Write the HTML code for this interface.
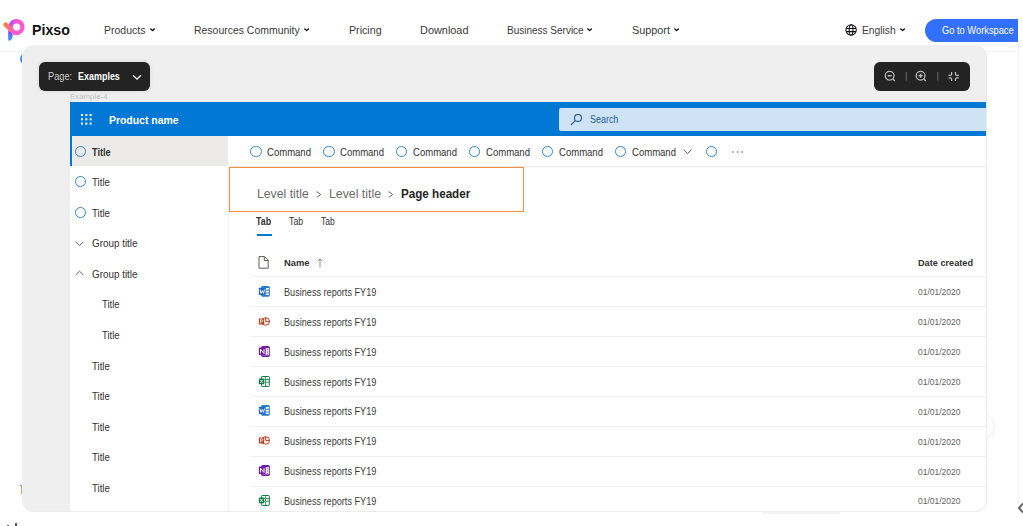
<!DOCTYPE html>
<html><head><meta charset="utf-8">
<style>
*{margin:0;padding:0;box-sizing:border-box}
html,body{width:1023px;height:526px;overflow:hidden;background:#fff;font-family:"Liberation Sans",sans-serif;color:#323130}
.abs{position:absolute}
.t{position:absolute;white-space:nowrap;line-height:1}
</style></head><body>
<svg class="abs" style="left:0px;top:14px" width="30" height="30" viewBox="0 0 30 30">
  <defs>
   <linearGradient id="lgd" x1="0" y1="0" x2="0" y2="1"><stop offset="0" stop-color="#8a3cff"/><stop offset="1" stop-color="#2aa6ff"/></linearGradient>
   <linearGradient id="lgr" x1="0" y1="0" x2="1" y2="0.6"><stop offset="0" stop-color="#b04cff"/><stop offset="0.45" stop-color="#ff58cc"/><stop offset="1" stop-color="#ff58cc"/></linearGradient>
   <linearGradient id="lgo" gradientUnits="userSpaceOnUse" x1="5" y1="10.5" x2="14" y2="18.5"><stop offset="0" stop-color="#ff7a40"/><stop offset="0.55" stop-color="#ff6a8a"/><stop offset="1" stop-color="#ff58cc"/></linearGradient>
  </defs>
  <circle cx="16.5" cy="13.1" r="5.9" fill="none" stroke="url(#lgr)" stroke-width="4.4"/>
  <path d="M8.2 16.5 L8.2 25.8 Q8.4 27.2 10 26.6 Q12.6 25.2 12.6 21.2 L12.6 18.5 Z" fill="url(#lgd)"/>
  <path d="M5.6 10.6 L13.6 18.2" stroke="url(#lgo)" stroke-width="4.4" stroke-linecap="round"/>
</svg>
<div class="t" style="left:31.70px;top:23.00px;font-size:14.5px;transform:scaleX(0.9789);transform-origin:0.00px 0;color:#111;font-weight:bold;">Pixso</div>
<div class="t" style="left:103.60px;top:25.00px;font-size:10.6px;transform:scaleX(0.9900);transform-origin:0.00px 0;color:#3a3a3a;font-weight:normal;">Products</div>
<svg class="abs" style="left:149.6px;top:28.1px" width="6" height="4" viewBox="0 0 6 4"><path d="M0.8 1 L2.6 2.5 L4.4 1" fill="none" stroke="#111" stroke-width="1.4" stroke-linecap="round" stroke-linejoin="round"/></svg>
<div class="t" style="left:194.40px;top:25.00px;font-size:10.6px;transform:scaleX(0.9868);transform-origin:0.00px 0;color:#3a3a3a;font-weight:normal;">Resources Community</div>
<svg class="abs" style="left:304.4px;top:28.1px" width="6" height="4" viewBox="0 0 6 4"><path d="M0.8 1 L2.6 2.5 L4.4 1" fill="none" stroke="#111" stroke-width="1.4" stroke-linecap="round" stroke-linejoin="round"/></svg>
<div class="t" style="left:348.80px;top:25.00px;font-size:10.6px;transform:scaleX(1.0067);transform-origin:0.00px 0;color:#3a3a3a;font-weight:normal;">Pricing</div>
<div class="t" style="left:419.70px;top:25.00px;font-size:10.6px;transform:scaleX(1.0294);transform-origin:0.00px 0;color:#3a3a3a;font-weight:normal;">Download</div>
<div class="t" style="left:506.50px;top:25.00px;font-size:10.6px;transform:scaleX(0.9434);transform-origin:0.00px 0;color:#3a3a3a;font-weight:normal;">Business Service</div>
<svg class="abs" style="left:587.4px;top:28.1px" width="6" height="4" viewBox="0 0 6 4"><path d="M0.8 1 L2.6 2.5 L4.4 1" fill="none" stroke="#111" stroke-width="1.4" stroke-linecap="round" stroke-linejoin="round"/></svg>
<div class="t" style="left:632.00px;top:25.00px;font-size:10.6px;transform:scaleX(1.0228);transform-origin:0.00px 0;color:#3a3a3a;font-weight:normal;">Support</div>
<svg class="abs" style="left:674.2px;top:28.1px" width="6" height="4" viewBox="0 0 6 4"><path d="M0.8 1 L2.6 2.5 L4.4 1" fill="none" stroke="#111" stroke-width="1.4" stroke-linecap="round" stroke-linejoin="round"/></svg>
<svg class="abs" style="left:844px;top:22.8px" width="14" height="14" viewBox="0 0 14 14"><g fill="none" stroke="#111" stroke-width="1.05"><circle cx="7.1" cy="7" r="5.2"/><ellipse cx="7.1" cy="7" rx="1.9" ry="5.2"/><path d="M2.2 5.4 H12 M2.2 8.6 H12"/></g></svg>
<div class="t" style="left:862.00px;top:25.00px;font-size:10.6px;transform:scaleX(0.9693);transform-origin:0.00px 0;color:#3a3a3a;font-weight:normal;">English</div>
<svg class="abs" style="left:899.9px;top:28.1px" width="6" height="4" viewBox="0 0 6 4"><path d="M0.8 1 L2.6 2.5 L4.4 1" fill="none" stroke="#111" stroke-width="1.4" stroke-linecap="round" stroke-linejoin="round"/></svg>
<div class="abs" style="left:925px;top:18.5px;width:93.2px;height:23.2px;background:#3370ff;border-radius:12px 0 0 12px"></div>
<div class="t" style="left:941.50px;top:26.00px;font-size:10.3px;transform:scaleX(0.9035);transform-origin:0.00px 0;color:#fff;font-weight:normal;">Go to Workspace</div>
<div class="abs" style="left:0;top:51px;width:1018px;height:1px;background:#f4f4f4"></div>
<div class="abs" style="left:1018px;top:42px;width:1px;height:473px;background:#f5f5f5"></div>
<div class="abs" style="left:971px;top:415px;width:22px;height:22px;border-radius:50%;background:#fff;box-shadow:0 1px 8px rgba(0,0,0,.09)"></div>
<div class="abs" style="left:763px;top:511px;width:77px;height:3px;background:#f4f4f7"></div>
<svg class="abs" style="left:1017px;top:502px" width="6" height="12" viewBox="0 0 6 12"><path d="M6 1.5 L2 6 L6 10.5" fill="none" stroke="#666" stroke-width="2"/></svg>
<div class="abs" style="left:20.2px;top:52.8px;width:12px;height:12px;border-radius:50%;background:#3a8bff"></div>
<div class="abs" style="left:21.3px;top:485.5px;width:1.2px;height:8px;background:#d9a066"></div><div class="abs" style="left:20px;top:485px;width:1.5px;height:1px;background:#999"></div>
<div class="abs" style="left:7px;top:525px;width:2px;height:1px;background:#777"></div><div class="abs" style="left:15px;top:523px;width:1.5px;height:3px;background:#555"></div>
<div class="abs" style="left:0;top:0;width:1023px;height:526px;clip-path:inset(45px 36px 14px 22px round 12px)"><div class="abs" style="left:0;top:0;width:1023px;height:526px;background:#efefef"></div>
<div class="abs" style="left:39px;top:62.3px;width:111px;height:28.3px;background:#232323;border-radius:6px;box-shadow:0 0 5px rgba(0,0,0,.1)"></div>
<div class="t" style="left:47.60px;top:71.00px;font-size:10.7px;transform:scaleX(0.8649);transform-origin:0.00px 0;color:#cfcfcf;font-weight:normal;">Page:</div>
<div class="t" style="left:77.70px;top:71.00px;font-size:10.7px;transform:scaleX(0.8385);transform-origin:0.00px 0;color:#fff;font-weight:bold;">Examples</div>
<svg class="abs" style="left:132px;top:73.5px" width="10" height="7" viewBox="0 0 10 7"><path d="M1 1.3 L5 5.2 L9 1.3" fill="none" stroke="#fff" stroke-width="1.3"/></svg>
<div class="abs" style="left:874px;top:62px;width:96px;height:28.7px;background:#232323;border-radius:6px"></div>
<svg class="abs" style="left:884px;top:70px" width="80" height="14" viewBox="0 0 80 14">
    <g fill="none" stroke="#bababa" stroke-width="1.3">
      <circle cx="5.6" cy="5.8" r="4.4"/><path d="M8.8 9 L10.8 11"/><path d="M3.6 5.8 H7.6" stroke-width="1.6"/>
      <circle cx="36.6" cy="5.8" r="4.4"/><path d="M39.8 9 L41.8 11"/><path d="M34.6 5.8 H38.6 M36.6 3.8 V7.8" stroke-width="1.5"/>
      <path d="M67.6 2 V4 Q67.6 5.3 66.3 5.3 H64.5 M71.5 2 V4 Q71.5 5.3 72.8 5.3 H74.8 M67.6 11 V9.2 Q67.6 7.9 66.3 7.9 H64.5 M71.5 11 V9.2 Q71.5 7.9 72.8 7.9 H74.8"/>
    </g>
    <path d="M22.3 2 V10.5 M53.8 2 V10.5" stroke="#6a6a6a" stroke-width="1"/>
  </svg>
<div class="t" style="left:69.50px;top:93.00px;font-size:8px;transform:scaleX(0.9806);transform-origin:0.00px 0;color:#bdbdbd;font-weight:normal;">Example-4</div>
<div class="abs" style="left:70px;top:102px;width:960px;height:420px;background:#fff"></div>
<div class="abs" style="left:70px;top:102px;width:960px;height:34px;background:#0078d4"></div>
<svg class="abs" style="left:80.5px;top:113.5px" width="11" height="11"><g fill="#fff"><rect x="0" y="0" width="2" height="2"/><rect x="0" y="4.3" width="2" height="2"/><rect x="0" y="8.6" width="2" height="2"/><rect x="4.3" y="0" width="2" height="2"/><rect x="4.3" y="4.3" width="2" height="2"/><rect x="4.3" y="8.6" width="2" height="2"/><rect x="8.6" y="0" width="2" height="2"/><rect x="8.6" y="4.3" width="2" height="2"/><rect x="8.6" y="8.6" width="2" height="2"/></g></svg>
<div class="t" style="left:108.80px;top:115.00px;font-size:11px;transform:scaleX(0.9473);transform-origin:0.00px 0;color:#fff;font-weight:bold;">Product name</div>
<div class="abs" style="left:559.3px;top:108.2px;width:460px;height:22.4px;background:#cee3f6;border-radius:2px"></div>
<svg class="abs" style="left:570px;top:113.5px" width="13" height="12" viewBox="0 0 13 12"><g fill="none" stroke="#245f96" stroke-width="1.1"><circle cx="8" cy="3.9" r="3.5"/><path d="M5.5 6.4 L0.9 11"/></g></svg>
<div class="t" style="left:590.00px;top:115.00px;font-size:10.2px;transform:scaleX(0.8783);transform-origin:0.00px 0;color:#245f96;font-weight:normal;">Search</div>
<div class="abs" style="left:70px;top:136px;width:158px;height:30px;background:#edebe9"></div>
<div class="abs" style="left:70px;top:136px;width:2px;height:30px;background:#0078d4"></div>
<div class="abs" style="left:227.5px;top:166px;width:1px;height:360px;background:#f3f2f1"></div>
<div class="abs" style="left:75px;top:145.70px;width:11.2px;height:11.2px;border:1.2px solid #2f86d6;border-radius:50%"></div>
<div class="t" style="left:92.00px;top:148.00px;font-size:10.2px;transform:scaleX(0.8987);transform-origin:0.00px 0;color:#323130;font-weight:bold;">Title</div>
<div class="abs" style="left:75px;top:176.26px;width:11.2px;height:11.2px;border:1.2px solid #2f86d6;border-radius:50%"></div>
<div class="t" style="left:92.00px;top:178.00px;font-size:10.2px;transform:scaleX(0.9539);transform-origin:0.00px 0;color:#323130;font-weight:normal;">Title</div>
<div class="abs" style="left:75px;top:206.82px;width:11.2px;height:11.2px;border:1.2px solid #2f86d6;border-radius:50%"></div>
<div class="t" style="left:92.00px;top:209.00px;font-size:10.2px;transform:scaleX(0.9539);transform-origin:0.00px 0;color:#323130;font-weight:normal;">Title</div>
<svg class="abs" style="left:75px;top:240.78px" width="9" height="6" viewBox="0 0 9 6"><path d="M0.6 0.8 L4.5 4.6 L8.4 0.8" fill="none" stroke="#605e5c" stroke-width="1"/></svg>
<div class="t" style="left:92.00px;top:239.00px;font-size:10.2px;transform:scaleX(0.9687);transform-origin:0.00px 0;color:#323130;font-weight:normal;">Group title</div>
<svg class="abs" style="left:75px;top:270.34px" width="9" height="6" viewBox="0 0 9 6"><path d="M0.6 5 L4.5 1.2 L8.4 5" fill="none" stroke="#605e5c" stroke-width="1"/></svg>
<div class="t" style="left:92.00px;top:270.00px;font-size:10.2px;transform:scaleX(0.9687);transform-origin:0.00px 0;color:#323130;font-weight:normal;">Group title</div>
<div class="t" style="left:101.70px;top:300.00px;font-size:10.2px;transform:scaleX(0.9327);transform-origin:0.00px 0;color:#323130;font-weight:normal;">Title</div>
<div class="t" style="left:101.70px;top:331.00px;font-size:10.2px;transform:scaleX(0.9327);transform-origin:0.00px 0;color:#323130;font-weight:normal;">Title</div>
<div class="t" style="left:92.10px;top:362.00px;font-size:10.2px;transform:scaleX(0.9433);transform-origin:0.00px 0;color:#323130;font-weight:normal;">Title</div>
<div class="t" style="left:92.10px;top:392.00px;font-size:10.2px;transform:scaleX(0.9433);transform-origin:0.00px 0;color:#323130;font-weight:normal;">Title</div>
<div class="t" style="left:92.10px;top:423.00px;font-size:10.2px;transform:scaleX(0.9433);transform-origin:0.00px 0;color:#323130;font-weight:normal;">Title</div>
<div class="t" style="left:92.10px;top:453.00px;font-size:10.2px;transform:scaleX(0.9433);transform-origin:0.00px 0;color:#323130;font-weight:normal;">Title</div>
<div class="t" style="left:92.10px;top:484.00px;font-size:10.2px;transform:scaleX(0.9433);transform-origin:0.00px 0;color:#323130;font-weight:normal;">Title</div>
<div class="abs" style="left:228px;top:166px;width:800px;height:1px;background:#edebe9"></div>
<div class="abs" style="left:250.30px;top:145.6px;width:11.4px;height:11.4px;border:1.2px solid #2f86d6;border-radius:50%"></div>
<div class="t" style="left:267.40px;top:147.00px;font-size:10.5px;transform:scaleX(0.9080);transform-origin:0.00px 0;color:#323130;font-weight:normal;">Command</div>
<div class="abs" style="left:323.20px;top:145.6px;width:11.4px;height:11.4px;border:1.2px solid #2f86d6;border-radius:50%"></div>
<div class="t" style="left:340.30px;top:147.00px;font-size:10.5px;transform:scaleX(0.9080);transform-origin:0.00px 0;color:#323130;font-weight:normal;">Command</div>
<div class="abs" style="left:396.10px;top:145.6px;width:11.4px;height:11.4px;border:1.2px solid #2f86d6;border-radius:50%"></div>
<div class="t" style="left:413.20px;top:147.00px;font-size:10.5px;transform:scaleX(0.9080);transform-origin:0.00px 0;color:#323130;font-weight:normal;">Command</div>
<div class="abs" style="left:469.00px;top:145.6px;width:11.4px;height:11.4px;border:1.2px solid #2f86d6;border-radius:50%"></div>
<div class="t" style="left:486.10px;top:147.00px;font-size:10.5px;transform:scaleX(0.9080);transform-origin:0.00px 0;color:#323130;font-weight:normal;">Command</div>
<div class="abs" style="left:541.90px;top:145.6px;width:11.4px;height:11.4px;border:1.2px solid #2f86d6;border-radius:50%"></div>
<div class="t" style="left:559.00px;top:147.00px;font-size:10.5px;transform:scaleX(0.9080);transform-origin:0.00px 0;color:#323130;font-weight:normal;">Command</div>
<div class="abs" style="left:614.80px;top:145.6px;width:11.4px;height:11.4px;border:1.2px solid #2f86d6;border-radius:50%"></div>
<div class="t" style="left:631.90px;top:147.00px;font-size:10.5px;transform:scaleX(0.9080);transform-origin:0.00px 0;color:#323130;font-weight:normal;">Command</div>
<svg class="abs" style="left:682.5px;top:149px" width="9" height="6" viewBox="0 0 9 6"><path d="M0.6 0.8 L4.5 4.6 L8.4 0.8" fill="none" stroke="#605e5c" stroke-width="1"/></svg>
<div class="abs" style="left:705.6px;top:145.6px;width:11.4px;height:11.4px;border:1.2px solid #2f86d6;border-radius:50%"></div>
<svg class="abs" style="left:732px;top:150.5px" width="12" height="3"><g fill="#605e5c"><circle cx="1" cy="1" r="0.8"/><circle cx="5.5" cy="1" r="0.8"/><circle cx="10" cy="1" r="0.8"/></g></svg>
<div class="abs" style="left:229.3px;top:167px;width:294.8px;height:45px;border:1.3px solid #ff8a3d"></div>
<div class="t" style="left:256.50px;top:188.00px;font-size:12.5px;transform:scaleX(0.9789);transform-origin:0.00px 0;color:#6b6b6b;font-weight:normal;">Level title</div>
<svg class="abs" style="left:316px;top:190.5px" width="6" height="7" viewBox="0 0 6 7"><path d="M0.7 0.5 L4.7 3.5 L0.7 6.5" fill="none" stroke="#605e5c" stroke-width="1"/></svg>
<div class="t" style="left:328.60px;top:188.00px;font-size:12.5px;transform:scaleX(0.9846);transform-origin:0.00px 0;color:#6b6b6b;font-weight:normal;">Level title</div>
<svg class="abs" style="left:388px;top:190.5px" width="6" height="7" viewBox="0 0 6 7"><path d="M0.7 0.5 L4.7 3.5 L0.7 6.5" fill="none" stroke="#605e5c" stroke-width="1"/></svg>
<div class="t" style="left:401.30px;top:188.00px;font-size:12.5px;transform:scaleX(0.9312);transform-origin:0.00px 0;color:#252525;font-weight:bold;">Page header</div>
<div class="t" style="left:256.30px;top:217.00px;font-size:10.2px;transform:scaleX(0.8683);transform-origin:0.00px 0;color:#323130;font-weight:bold;">Tab</div>
<div class="t" style="left:289.00px;top:217.00px;font-size:10.2px;transform:scaleX(0.8647);transform-origin:0.00px 0;color:#323130;font-weight:normal;">Tab</div>
<div class="t" style="left:321.20px;top:217.00px;font-size:10.2px;transform:scaleX(0.8403);transform-origin:0.00px 0;color:#323130;font-weight:normal;">Tab</div>
<div class="abs" style="left:256.5px;top:234.3px;width:15.7px;height:2px;background:#0078d4"></div>
<svg class="abs" style="left:257.5px;top:256px" width="11" height="13" viewBox="0 0 11 13"><path d="M1 0.6 H6.5 L10.2 4.3 V12.2 H1 Z M6.3 0.6 V4.5 H10.2" fill="none" stroke="#605e5c" stroke-width="1"/></svg>
<div class="t" style="left:284.10px;top:258.00px;font-size:9.6px;transform:scaleX(0.9786);transform-origin:0.00px 0;color:#323130;font-weight:bold;">Name</div>
<svg class="abs" style="left:317px;top:257.5px" width="6" height="10" viewBox="0 0 6 10"><path d="M3 1 V9.5 M0.7 3.3 L3 1 L5.3 3.3" fill="none" stroke="#8a8886" stroke-width="0.9"/></svg>
<div class="t" style="left:917.80px;top:258.00px;font-size:9.5px;transform:scaleX(0.9641);transform-origin:0.00px 0;color:#323130;font-weight:bold;">Date created</div>
<div class="abs" style="left:250.8px;top:276px;width:780px;height:1px;background:#f0efee"></div>
<svg class="abs" style="left:258px;top:286.0px" width="13" height="12" viewBox="0 0 13 12"><rect x="3.6" y="0.5" width="7.7" height="9.7" rx="0.6" fill="#fff" stroke="#2b7cd3" stroke-width="1"/><path d="M3.6 1.5 H11.3 M7.5 4.3 H11.3 M7.5 7 H11.3 M3.6 9.6 H11.3" stroke="#2b7cd3" stroke-width="1.1"/><rect x="0.85" y="1.8" width="6.85" height="7.3" rx="0.5" fill="#1f6cc4"/><path d="M2 3.6 L3 7.4 L4.3 4.6 L5.5 7.4 L6.5 3.6" fill="none" stroke="#fff" stroke-width="0.9"/></svg>
<div class="t" style="left:284.20px;top:288.00px;font-size:10.2px;transform:scaleX(0.8956);transform-origin:0.00px 0;color:#3b3a39;font-weight:normal;">Business reports FY19</div>
<div class="t" style="left:917.50px;top:288.00px;font-size:9.1px;transform:scaleX(0.9331);transform-origin:0.00px 0;color:#616161;font-weight:normal;">01/01/2020</div>
<div class="abs" style="left:250.8px;top:306.00px;width:780px;height:1px;background:#f0efee"></div>
<svg class="abs" style="left:258px;top:315.86px" width="13" height="12" viewBox="0 0 13 12"><circle cx="7.7" cy="5.45" r="3.8" fill="#fff" stroke="#c43e1c" stroke-width="1"/><path d="M7.7 1.6 V5.45 H11.5" fill="none" stroke="#c43e1c" stroke-width="1"/><rect x="0.85" y="2.5" width="5.3" height="5.9" rx="0.5" fill="#c43e1c"/><path d="M2.6 7.4 V3.7 H3.7 Q4.8 3.7 4.8 4.8 Q4.8 5.9 3.7 5.9 H2.6" fill="none" stroke="#fff" stroke-width="0.8"/></svg>
<div class="t" style="left:284.20px;top:318.00px;font-size:10.2px;transform:scaleX(0.8956);transform-origin:0.00px 0;color:#3b3a39;font-weight:normal;">Business reports FY19</div>
<div class="t" style="left:917.50px;top:318.00px;font-size:9.1px;transform:scaleX(0.9331);transform-origin:0.00px 0;color:#616161;font-weight:normal;">01/01/2020</div>
<div class="abs" style="left:250.8px;top:336.00px;width:780px;height:1px;background:#f0efee"></div>
<svg class="abs" style="left:258px;top:345.72px" width="13" height="12" viewBox="0 0 13 12"><rect x="3.6" y="0.5" width="7.7" height="10" rx="0.6" fill="#fff" stroke="#7719aa" stroke-width="1"/><path d="M3.6 1.5 H11.3 M3.6 9.8 H11.3" stroke="#7719aa" stroke-width="1.1"/><path d="M9.3 2.8 V3.8 M9.3 5.6 V6.6 M9.3 8.3 V9.1" stroke="#7719aa" stroke-width="1.1"/><rect x="0.85" y="1.6" width="6.85" height="7.3" rx="0.6" fill="#7719aa"/><path d="M2.5 7.5 V3.2 L6 7.5 V3.2" fill="none" stroke="#fff" stroke-width="1"/></svg>
<div class="t" style="left:284.20px;top:348.00px;font-size:10.2px;transform:scaleX(0.8956);transform-origin:0.00px 0;color:#3b3a39;font-weight:normal;">Business reports FY19</div>
<div class="t" style="left:917.50px;top:348.00px;font-size:9.1px;transform:scaleX(0.9331);transform-origin:0.00px 0;color:#616161;font-weight:normal;">01/01/2020</div>
<div class="abs" style="left:250.8px;top:366.00px;width:780px;height:1px;background:#f0efee"></div>
<svg class="abs" style="left:258px;top:375.58px" width="13" height="12" viewBox="0 0 13 12"><rect x="3.6" y="0.5" width="7.7" height="9.9" rx="0.6" fill="#fff" stroke="#107c41" stroke-width="1"/><path d="M5 3.5 H11.3 M5 6.2 H11.3 M7.6 0.5 V10.4" stroke="#107c41" stroke-width="1" opacity="0.8"/><rect x="0.85" y="2.5" width="5.3" height="5.8" rx="0.4" fill="#107c41"/><path d="M2.2 3.8 L4.8 7 M4.8 3.8 L2.2 7" fill="none" stroke="#fff" stroke-width="0.9"/></svg>
<div class="t" style="left:284.20px;top:378.00px;font-size:10.2px;transform:scaleX(0.8956);transform-origin:0.00px 0;color:#3b3a39;font-weight:normal;">Business reports FY19</div>
<div class="t" style="left:917.50px;top:378.00px;font-size:9.1px;transform:scaleX(0.9331);transform-origin:0.00px 0;color:#616161;font-weight:normal;">01/01/2020</div>
<div class="abs" style="left:250.8px;top:396.00px;width:780px;height:1px;background:#f0efee"></div>
<svg class="abs" style="left:258px;top:405.44px" width="13" height="12" viewBox="0 0 13 12"><rect x="3.6" y="0.5" width="7.7" height="9.7" rx="0.6" fill="#fff" stroke="#2b7cd3" stroke-width="1"/><path d="M3.6 1.5 H11.3 M7.5 4.3 H11.3 M7.5 7 H11.3 M3.6 9.6 H11.3" stroke="#2b7cd3" stroke-width="1.1"/><rect x="0.85" y="1.8" width="6.85" height="7.3" rx="0.5" fill="#1f6cc4"/><path d="M2 3.6 L3 7.4 L4.3 4.6 L5.5 7.4 L6.5 3.6" fill="none" stroke="#fff" stroke-width="0.9"/></svg>
<div class="t" style="left:284.20px;top:407.00px;font-size:10.2px;transform:scaleX(0.8956);transform-origin:0.00px 0;color:#3b3a39;font-weight:normal;">Business reports FY19</div>
<div class="t" style="left:917.50px;top:408.00px;font-size:9.1px;transform:scaleX(0.9331);transform-origin:0.00px 0;color:#616161;font-weight:normal;">01/01/2020</div>
<div class="abs" style="left:250.8px;top:426.00px;width:780px;height:1px;background:#f0efee"></div>
<svg class="abs" style="left:258px;top:435.3px" width="13" height="12" viewBox="0 0 13 12"><circle cx="7.7" cy="5.45" r="3.8" fill="#fff" stroke="#c43e1c" stroke-width="1"/><path d="M7.7 1.6 V5.45 H11.5" fill="none" stroke="#c43e1c" stroke-width="1"/><rect x="0.85" y="2.5" width="5.3" height="5.9" rx="0.5" fill="#c43e1c"/><path d="M2.6 7.4 V3.7 H3.7 Q4.8 3.7 4.8 4.8 Q4.8 5.9 3.7 5.9 H2.6" fill="none" stroke="#fff" stroke-width="0.8"/></svg>
<div class="t" style="left:284.20px;top:437.00px;font-size:10.2px;transform:scaleX(0.8956);transform-origin:0.00px 0;color:#3b3a39;font-weight:normal;">Business reports FY19</div>
<div class="t" style="left:917.50px;top:438.00px;font-size:9.1px;transform:scaleX(0.9331);transform-origin:0.00px 0;color:#616161;font-weight:normal;">01/01/2020</div>
<div class="abs" style="left:250.8px;top:456.00px;width:780px;height:1px;background:#f0efee"></div>
<svg class="abs" style="left:258px;top:465.16px" width="13" height="12" viewBox="0 0 13 12"><rect x="3.6" y="0.5" width="7.7" height="10" rx="0.6" fill="#fff" stroke="#7719aa" stroke-width="1"/><path d="M3.6 1.5 H11.3 M3.6 9.8 H11.3" stroke="#7719aa" stroke-width="1.1"/><path d="M9.3 2.8 V3.8 M9.3 5.6 V6.6 M9.3 8.3 V9.1" stroke="#7719aa" stroke-width="1.1"/><rect x="0.85" y="1.6" width="6.85" height="7.3" rx="0.6" fill="#7719aa"/><path d="M2.5 7.5 V3.2 L6 7.5 V3.2" fill="none" stroke="#fff" stroke-width="1"/></svg>
<div class="t" style="left:284.20px;top:467.00px;font-size:10.2px;transform:scaleX(0.8956);transform-origin:0.00px 0;color:#3b3a39;font-weight:normal;">Business reports FY19</div>
<div class="t" style="left:917.50px;top:468.00px;font-size:9.1px;transform:scaleX(0.9331);transform-origin:0.00px 0;color:#616161;font-weight:normal;">01/01/2020</div>
<div class="abs" style="left:250.8px;top:486.00px;width:780px;height:1px;background:#f0efee"></div>
<svg class="abs" style="left:258px;top:495.02px" width="13" height="12" viewBox="0 0 13 12"><rect x="3.6" y="0.5" width="7.7" height="9.9" rx="0.6" fill="#fff" stroke="#107c41" stroke-width="1"/><path d="M5 3.5 H11.3 M5 6.2 H11.3 M7.6 0.5 V10.4" stroke="#107c41" stroke-width="1" opacity="0.8"/><rect x="0.85" y="2.5" width="5.3" height="5.8" rx="0.4" fill="#107c41"/><path d="M2.2 3.8 L4.8 7 M4.8 3.8 L2.2 7" fill="none" stroke="#fff" stroke-width="0.9"/></svg>
<div class="t" style="left:284.20px;top:497.00px;font-size:10.2px;transform:scaleX(0.8956);transform-origin:0.00px 0;color:#3b3a39;font-weight:normal;">Business reports FY19</div>
<div class="t" style="left:917.50px;top:497.00px;font-size:9.1px;transform:scaleX(0.9331);transform-origin:0.00px 0;color:#616161;font-weight:normal;">01/01/2020</div>
<div class="abs" style="left:986.5px;top:102px;width:1px;height:420px;background:#ececec"></div></div>
<div class="abs" style="left:22px;top:45px;width:965px;height:467px;border:1px solid #ebebeb;border-radius:12px;border-top-color:transparent;border-left-color:transparent"></div>
</body></html>
